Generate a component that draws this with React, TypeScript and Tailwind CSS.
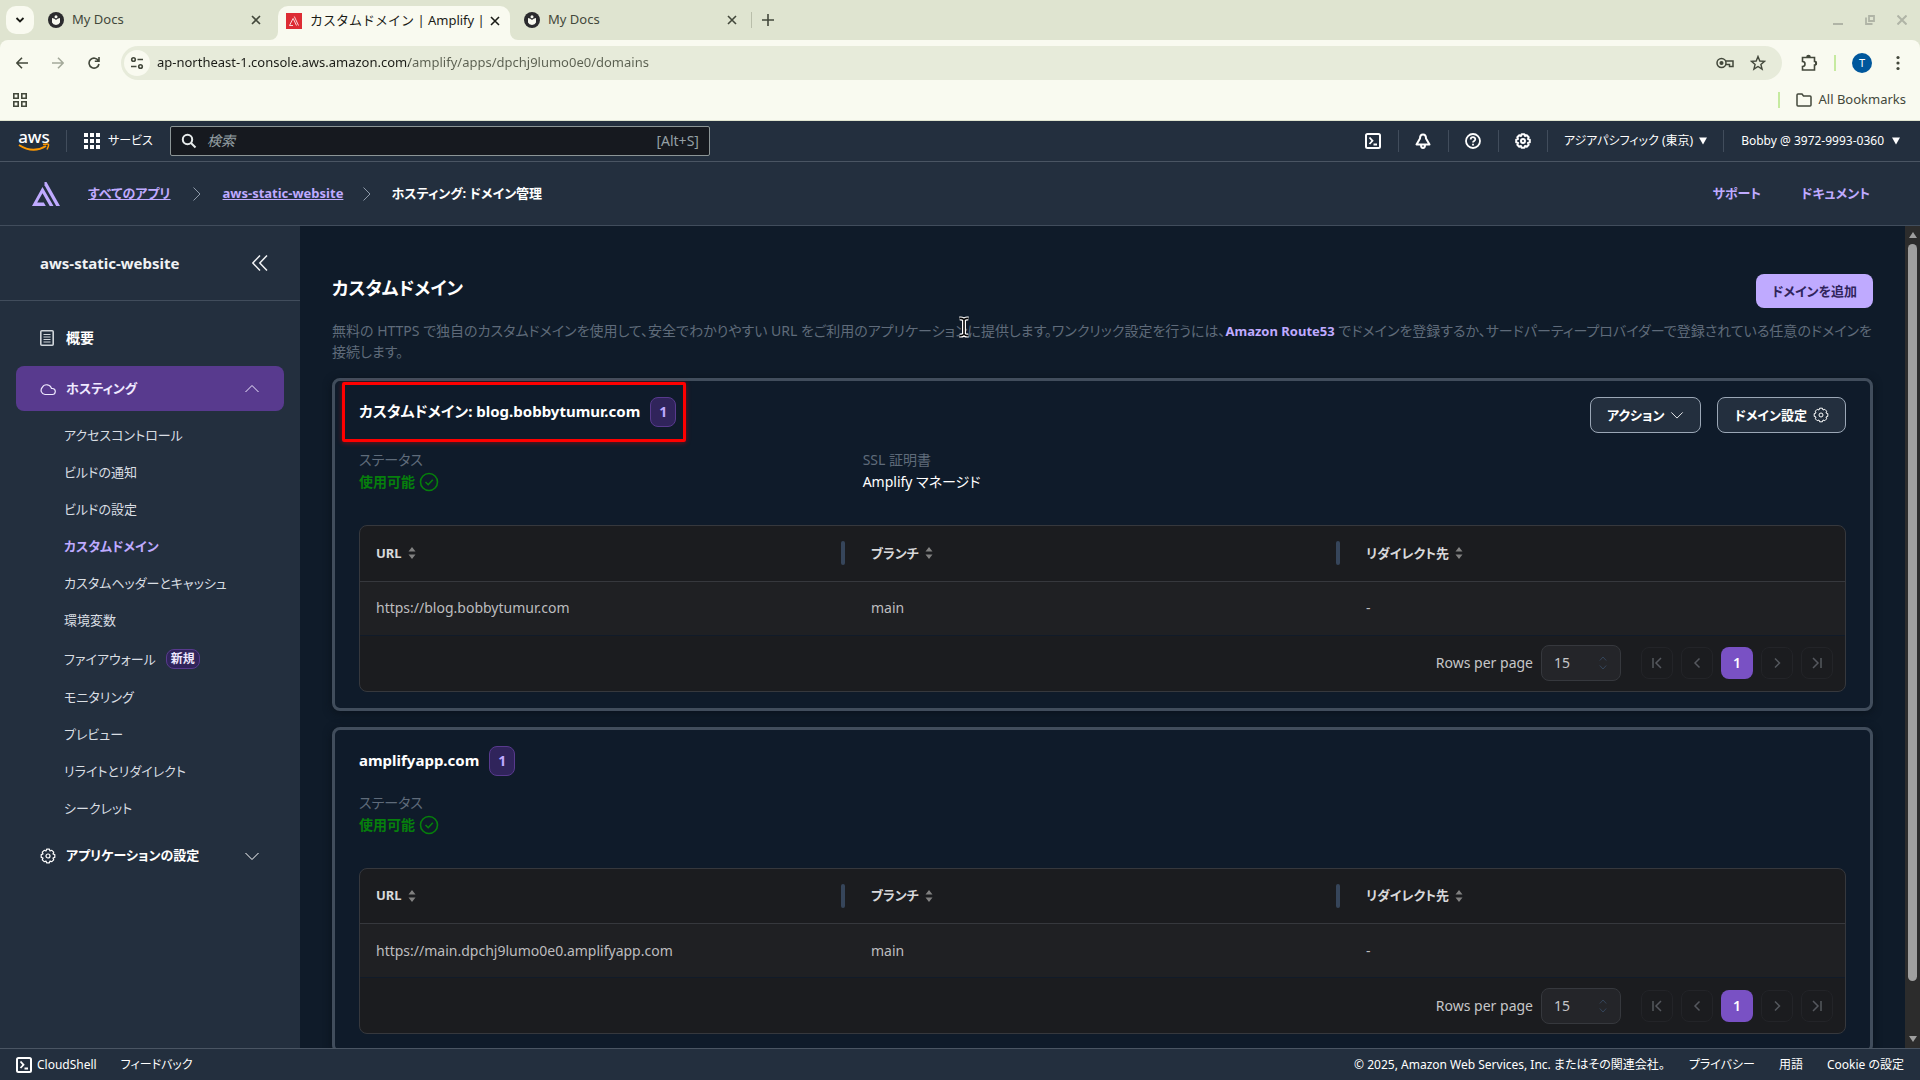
import type { ReactNode } from "react";

const font = "font-['Noto_Sans','Noto_Sans_CJK_JP',sans-serif]";

function Gear({ className }: { className: string }) {
  return (
    <svg viewBox="0 0 16 16" fill="none" stroke="currentColor" strokeLinejoin="round" className={className}>
      <path d="M6.6 1.2h2.8l.6 1.8 1.8-.7 1.9 1.9-.7 1.8 1.8.6v2.8l-1.8.6.7 1.8-1.9 1.9-1.8-.7-.6 1.8H6.6L6 13l-1.800.7-1.900-1.900.7-1.800-1.800-.6V6.600L3 6l-.7-1.800 1.900-1.900L6 3z" />
      <circle cx="8" cy="8" r="2" />
    </svg>
  );
}

function ShellIcon({ className }: { className: string }) {
  return (
    <svg viewBox="0 0 16 16" fill="none" stroke="currentColor" strokeWidth="2" className={className}>
      <rect x="1" y="1" width="14" height="14" rx="1.5" />
      <path d="M4.5 4.5l3 3.3-3 3.2M8.5 11.5H12" strokeWidth="1.8" />
    </svg>
  );
}

function Chevron({ d, className }: { d: string; className: string }) {
  return (
    <svg viewBox="0 0 16 16" fill="none" stroke="currentColor" className={className}>
      <path d={d} />
    </svg>
  );
}

function Favicon() {
  return (
    <svg viewBox="0 0 16 16" className="size-4 shrink-0">
      <circle cx="8" cy="8" r="8" fill="#2b2b2e" />
      <path d="M4 6l2.500.8a2 2 0 0 0 3 0L12 6v4.500q-1 2-4 2.500-3-.5-4-2.500z" fill="#f8f9f0" />
      <circle cx="8" cy="4.8" r="1.5" fill="#f8f9f0" />
    </svg>
  );
}

function CloseIcon() {
  return (
    <svg viewBox="0 0 10 10" fill="none" stroke="currentColor" strokeWidth="1.6" className="size-2.5">
      <path d="M1 1l8 8M9 1l-8 8" />
    </svg>
  );
}

function Tab({ title, className, icon }: { title: string; className: string; icon: ReactNode }) {
  return (
    <div className={`flex items-center gap-2 text-[13px] ${className}`}>
      {icon}
      <span className="min-w-0 flex-1 whitespace-nowrap">{title}</span>
      <button aria-label={`Close ${title}`}>
        <CloseIcon />
      </button>
    </div>
  );
}

function BrowserChrome() {
  return (
    <div className="shrink-0 bg-[#dfe4d0] text-[#43483b]">
      <div className="flex h-10 items-center">
        <button aria-label="Search tabs" className="ml-1.5 flex size-7 items-center justify-center rounded-[10px] bg-[#f9faf0] text-[#1b1c17]">
          <svg viewBox="0 0 10 10" fill="none" stroke="currentColor" strokeWidth="1.8" className="size-2.5">
            <path d="M1.5 3 5 6.5 8.5 3" />
          </svg>
        </button>
        <Tab title="My Docs" icon={<Favicon />} className="ml-3.5 w-[213px]" />
        <div className="relative ml-[17px] flex h-[34px] w-[232px] self-end rounded-t-[10px] bg-[#f9faf0] pr-2.5 pl-2">
          <svg viewBox="0 0 8 8" className="absolute bottom-0 -left-2 size-2" fill="#f9faf0">
            <path d="M8 0v8H0a8 8 0 0 0 8-8z" />
          </svg>
          <svg viewBox="0 0 8 8" className="absolute -right-2 bottom-0 size-2" fill="#f9faf0">
            <path d="M0 0v8h8a8 8 0 0 1-8-8z" />
          </svg>
          <Tab
            title="カスタムドメイン | Amplify |"
            className="h-[29px] min-w-0 flex-1 text-[#1b1c17]"
            icon={
              <svg viewBox="0 0 16 16" className="size-4 shrink-0">
                <rect width="16" height="16" fill="#dd2c34" />
                <path d="M7 5.500 3.500 12.500H7M7.200 5.500l3.300 7M8.300 3.500l4.200 9" fill="none" stroke="#fff" strokeWidth=".8" />
              </svg>
            }
          />
        </div>
        <Tab title="My Docs" icon={<Favicon />} className="ml-3.5 w-[213px]" />
        <div className="ml-3.5 h-4 w-px bg-[#b9beaa]" />
        <button aria-label="New tab" className="ml-2.5">
          <svg viewBox="0 0 12 12" fill="none" stroke="currentColor" strokeWidth="1.6" className="size-3">
            <path d="M6 0v12M0 6h12" />
          </svg>
        </button>
        <div className="ml-auto flex items-center gap-[22px] pr-[13px] text-[#b0b4a6]">
          <svg viewBox="0 0 10 10" className="size-2.5" stroke="currentColor" strokeWidth="2">
            <path d="M0 9h10" />
          </svg>
          <svg viewBox="0 0 10 10" className="size-2.5" fill="none" stroke="currentColor" strokeWidth="1.8">
            <path d="M4 1h5v5H4zM1 2.500V9h6.500" />
          </svg>
          <svg viewBox="0 0 10 10" className="size-2.5" fill="none" stroke="currentColor" strokeWidth="2">
            <path d="M.5.5l9 9M9.500.5l-9 9" />
          </svg>
        </div>
      </div>

      <div className="rounded-t-lg border-b border-[#dfe4d0] bg-[#f9faf0]">
        <div className="flex h-10 items-end">
          <div className="flex h-[34px] flex-1 items-center">
            <button aria-label="Back" className="ml-4">
              <svg viewBox="0 0 12 12" fill="none" stroke="currentColor" strokeWidth="1.6" className="size-3">
                <path d="M6 .8.8 6 6 11.200M1 6h11" />
              </svg>
            </button>
            <button aria-label="Forward" className="ml-6 text-[#a4a99a]">
              <svg viewBox="0 0 12 12" fill="none" stroke="currentColor" strokeWidth="1.6" className="size-3">
                <path d="M6 .8 11.200 6 6 11.200M11 6H0" />
              </svg>
            </button>
            <button aria-label="Reload" className="ml-6">
              <svg viewBox="0 0 12 12" fill="none" stroke="currentColor" strokeWidth="1.6" className="size-3">
                <path d="M10.500 3.800A5 5 0 1 0 11 7M11 0v4.200H6.800" />
              </svg>
            </button>
            <div className="ml-[21px] flex h-[34px] flex-1 items-center rounded-full bg-[#e7ebda] pr-4">
              <button aria-label="Site information" className="ml-[3px] flex size-[26px] items-center justify-center rounded-full bg-[#f9faf0]">
                <svg viewBox="0 0 14 14" fill="none" stroke="currentColor" strokeWidth="1.6" className="size-3.5">
                  <circle cx="3.5" cy="3.5" r="1.8" />
                  <path d="M7.500 3.500H13M1 10.500h5.500" />
                  <circle cx="10.5" cy="10.5" r="1.8" />
                </svg>
              </button>
              <input
                aria-label="Address"
                defaultValue="ap-northeast-1.console.aws.amazon.com/amplify/apps/dpchj9lumo0e0/domains"
                className="ml-[7px] min-w-0 flex-1 bg-[linear-gradient(90deg,#1b1c17_252px,#5a5f50_252px)] bg-clip-text text-[13px] text-transparent outline-none"
              />
              <svg viewBox="0 0 18 12" fill="none" stroke="currentColor" strokeWidth="1.5" className="h-3 w-[18px]">
                <circle cx="5.5" cy="6" r="4.5" />
                <circle cx="5.5" cy="6" r="1.3" fill="currentColor" />
                <path d="M9.500 4H17v5.500h-3.500V7.500H9.500" />
              </svg>
              <svg viewBox="0 0 16 16" fill="none" stroke="currentColor" strokeWidth="1.4" className="ml-4 size-4">
                <path d="m8 1.500 1.800 4.500 4.700.4-3.600 3 1.200 4.700L8 11.500l-4.100 2.600 1.200-4.700-3.600-3L6.200 6z" />
              </svg>
            </div>
            <button aria-label="Extensions" className="ml-[18px]">
              <svg viewBox="0 0 18 18" fill="none" stroke="currentColor" strokeWidth="1.6" className="size-[18px]">
                <path d="M2.500 3.500h12v4a1.500 1.500 0 0 1 0 3.500v5h-12v-3.500a2.500 2.500 0 0 0 0-5z" />
                <path d="M7 3a1.500 1.500 0 0 1 3 0M15 7.500a1.800 1.800 0 0 1 0 3.500" fill="currentColor" />
              </svg>
            </button>
            <div className="ml-4 h-4 w-0.5 bg-[#c6eaa0]" />
            <button className="ml-4 flex size-5 items-center justify-center rounded-full bg-[#00579c] text-[11px] text-white">T</button>
            <button aria-label="Menu" className="mr-5 ml-6">
              <svg viewBox="0 0 4 16" fill="currentColor" className="h-4 w-1">
                <circle cx="2" cy="2.5" r="1.6" />
                <circle cx="2" cy="8" r="1.6" />
                <circle cx="2" cy="13.5" r="1.6" />
              </svg>
            </button>
          </div>
        </div>
        <div className="flex h-10 items-center pr-3.5 pl-3">
          <svg viewBox="0 0 16 16" fill="none" stroke="currentColor" strokeWidth="1.6" className="size-4">
            <path d="M1.800 1.800h4.400v4.400H1.800zM9.800 1.800h4.400v4.400H9.800zM1.800 9.800h4.400v4.400H1.800zM9.800 9.800h4.400v4.400H9.800z" />
          </svg>
          <div className="ml-auto h-4 w-0.5 bg-[#c6eaa0]" />
          <svg viewBox="0 0 16 14" fill="none" stroke="currentColor" strokeWidth="1.5" className="mr-1.5 ml-4 h-3.5 w-4">
            <path d="M1 12V2q0-1 1-1h4l1.500 2H14q1 0 1 1v8q0 1-1 1H2q-1 0-1-1z" />
          </svg>
          <span className="text-[13px]">All Bookmarks</span>
        </div>
      </div>
    </div>
  );
}

function AwsNav() {
  return (
    <header className="flex h-[41px] shrink-0 items-center border-b border-[#4a5563] bg-[#232f3e] text-xs text-white">
      <a href="#home" aria-label="aws" className="ml-[18px]">
        <div className="flex h-[22px] w-8 flex-col items-center">
          <span className="text-[17px] leading-[13px] font-medium">aws</span>
          <svg viewBox="0 0 32 9" className="h-[9px] w-8" fill="none" stroke="#ff9900" strokeWidth="2">
            <path d="M1 2q14 9 27 1" />
            <path d="M25 1.500q5-1 5.500 0t-1.500 5" strokeWidth="1.5" />
          </svg>
        </div>
      </a>
      <div className="ml-4 h-[22px] w-px bg-[#414d5c]" />
      <button className="ml-[17px] flex items-center gap-2">
        <svg viewBox="0 0 16 16" fill="currentColor" className="size-4">
          <path d="M0 0h4v4H0zM6 0h4v4H6zM12 0h4v4h-4zM0 6h4v4H0zM6 6h4v4H6zM12 6h4v4h-4zM0 12h4v4H0zM6 12h4v4H6zM12 12h4v4h-4z" />
        </svg>
        サービス
      </button>
      <div className="ml-[17px] flex h-[30px] w-[540px] items-center rounded-xs border border-[#8c9596] bg-[#16191f] px-2.5 text-sm text-[#95a0a5]">
        <svg viewBox="0 0 16 16" fill="none" stroke="#e8ecec" strokeWidth="2" className="size-4">
          <circle cx="6.5" cy="6.5" r="4.7" />
          <path d="m10 10 4.500 4.500" />
        </svg>
        <input
          aria-label="検索"
          placeholder="検索"
          className="ml-2.5 min-w-0 flex-1 bg-transparent outline-none placeholder:text-[#95a0a5] placeholder:italic"
        />
        <span>[Alt+S]</span>
      </div>
      <div className="ml-auto flex items-center">
        <button aria-label="CloudShell" className="flex w-[50px] justify-center">
          <ShellIcon className="size-4" />
        </button>
        <button aria-label="Notifications" className="flex h-[22px] w-[50px] items-center justify-center border-l border-[#414d5c]">
          <svg viewBox="0 0 16 16" fill="none" stroke="currentColor" strokeWidth="2" strokeLinejoin="round" className="size-4">
            <path d="M8 1.500C5.500 1.500 5 3.500 5 5.500L1.500 11.500h13L11 5.500c0-2-.5-4-3-4zM6 12c0 4 4 4 4 0" />
          </svg>
        </button>
        <button aria-label="Help" className="flex h-[22px] w-[50px] items-center justify-center border-l border-[#414d5c]">
          <svg viewBox="0 0 16 16" fill="none" stroke="currentColor" strokeWidth="1.8" className="size-4">
            <circle cx="8" cy="8" r="7" />
            <path d="M5.700 6.500c0-3 4.600-3 4.600-.2C10.300 8 8 7.800 8 9.500M8 10.800v1.700" />
          </svg>
        </button>
        <button aria-label="Settings" className="flex h-[22px] w-[50px] items-center justify-center border-x border-[#414d5c]">
          <Gear className="size-4 stroke-2" />
        </button>
        <button className="flex h-[22px] items-center gap-1.5 pr-4 pl-4">
          アジアパシフィック (東京)
          <svg viewBox="0 0 8 8" fill="currentColor" className="size-2">
            <path d="M0 .5h8l-4 7z" />
          </svg>
        </button>
        <button className="flex h-[22px] items-center gap-2 border-l border-[#414d5c] pr-5 pl-[17px]">
          Bobby @ 3972-9993-0360
          <svg viewBox="0 0 8 8" fill="currentColor" className="size-2">
            <path d="M0 .5h8l-4 7z" />
          </svg>
        </button>
      </div>
    </header>
  );
}

function AmplifyBar() {
  return (
    <div className="flex h-16 shrink-0 items-center border-b border-[#414d5c] bg-[#232f3e] pr-[50px] pl-8 text-[13px] font-bold text-[#bfaaff]">
      <svg viewBox="0 0 28 24" fill="currentColor" className="h-6 w-7">
        <path d="M10.500 5l11 19h-3.800l-7.200-12.700-5.300 9.300h6.600l2 3.400H0z" />
        <path d="M12.500 0h2L28 24h-3.800L12.500 3.300z" />
      </svg>
      <nav className="ml-7 flex items-center">
        <a href="#apps" className="underline">すべてのアプリ</a>
        <Chevron d="m4.500 1.500 6.500 6.500-6.500 6.500" className="mx-4.5 size-4 text-[#8d99a8]" />
        <a href="#app" className="underline">aws-static-website</a>
        <Chevron d="m4.500 1.500 6.500 6.500-6.500 6.500" className="mx-4 size-4 text-[#8d99a8]" />
        <span className="text-white">ホスティング: ドメイン管理</span>
      </nav>
      <a href="#support" className="ml-auto">サポート</a>
      <a href="#docs" className="ml-10">ドキュメント</a>
    </div>
  );
}

const items = [
  "アクセスコントロール",
  "ビルドの通知",
  "ビルドの設定",
  "カスタムドメイン",
  "カスタムヘッダーとキャッシュ",
  "環境変数",
  "ファイアウォール",
  "モニタリング",
  "プレビュー",
  "リライトとリダイレクト",
  "シークレット",
];

function Sidebar() {
  return (
    <aside className="w-[300px] shrink-0 bg-[#232f3e] text-[13px] text-[#d9dee3]">
      <div className="flex h-[75px] items-center justify-between border-b border-[#414d5c] pr-8 pl-10 text-[15px] font-bold text-[#f0f2f4]">
        aws-static-website
        <button aria-label="Collapse">
          <Chevron d="M8 .5.8 8 8 15.500M15 .5 7.800 8l7.200 7.500" className="size-4 stroke-[1.500px]" />
        </button>
      </div>
      <nav className="px-4 pt-4">
        <a href="#overview" className="flex h-[41px] items-center gap-3 pl-6 text-sm font-bold text-white">
          <svg viewBox="0 0 14 16" fill="none" stroke="#d0d5da" strokeWidth="1.6" className="h-4 w-3.5">
            <rect x=".8" y=".8" width="12.4" height="14.4" rx="1" />
            <path d="M3.500 4.500h7M3.500 7h7M3.500 9.500h7M3.500 12h7" strokeWidth="1.2" />
          </svg>
          概要
        </a>
        <button className="mt-2 flex h-[45px] w-full items-center gap-2.5 rounded-lg bg-[#583a8e] pr-6 pl-6 font-bold text-[#efe9ff]">
          <svg viewBox="0 0 16 16" fill="none" stroke="currentColor" strokeWidth="1.2" className="size-4">
            <path d="M5 13.500h7a3 3 0 0 0 .5-6H11.500a5 5 0 0 0-9.300-1A4.200 4.200 0 0 0 5 13.500z" />
          </svg>
          ホスティング
          <Chevron d="m1.500 11 6.500-6.500L14.500 11" className="ml-auto size-4" />
        </button>
        <ul className="mt-1.5 pl-12">
          {items.map((item) => (
            <li key={item}>
              <a
                href="#item"
                aria-current={item === "カスタムドメイン" ? "page" : undefined}
                className="flex items-center py-2 leading-[21px] aria-[current=page]:font-bold aria-[current=page]:text-[#bfaaff]"
              >
                {item}
                {item === "ファイアウォール" && (
                  <span className="my-0.5 ml-2.5 rounded-lg border border-[#583a8e] bg-[#30245b] px-1 text-xs leading-[18px] font-bold text-[#efe9ff]">新規</span>
                )}
              </a>
            </li>
          ))}
        </ul>
        <button className="mt-2 flex h-[41px] w-full items-center gap-2.5 pr-6 pl-6 font-bold text-white">
          <Gear className="size-4 stroke-[1.200px]" />
          アプリケーションの設定
          <Chevron d="M1.500 5 8 11.500 14.500 5" className="ml-auto size-4" />
        </button>
      </nav>
    </aside>
  );
}

function SortIcon() {
  return (
    <svg viewBox="0 0 8 12" fill="#808080" className="h-3 w-2">
      <path d="M4 0l3.500 4.500h-7zM4 12l3.500-4.500h-7z" />
    </svg>
  );
}

function PageButton({ label, d }: { label: string; d: string }) {
  return (
    <button disabled aria-label={label} className="flex size-8 items-center justify-center rounded-lg border border-[#232428] text-[#55585e]">
      <Chevron d={d} className="size-4 stroke-[1.500px]" />
    </button>
  );
}

function DomainTable({ url, id }: { url: string; id: string }) {
  return (
    <div className="overflow-hidden rounded-lg border border-[#36383d] bg-[#1b1c1f]">
      <table className="w-full table-fixed text-left text-sm text-[#bdbdbf]">
        <thead>
          <tr className="h-[55px] border-b border-[#36383d] text-[13px] text-[#d8d8da]">
            {["URL", "ブランチ", "リダイレクト先"].map((h, i) => (
              <th key={h} className="py-0 pl-4 font-bold">
                <div className="flex h-6 items-center gap-1.5">
                  {h}
                  <SortIcon />
                  {i < 2 && <span className="mr-2.5 ml-auto h-6 w-1 rounded-full bg-[#36455a]" />}
                </div>
              </th>
            ))}
          </tr>
        </thead>
        <tbody>
          <tr className="h-[54px] border-b border-[#111b29] bg-[#1f2023]">
            <td className="pl-4">{url}</td>
            <td className="pl-4">main</td>
            <td className="pl-4">-</td>
          </tr>
        </tbody>
      </table>
      <div className="flex h-[55px] items-center justify-end gap-2 pr-3 text-sm text-[#c6c6c8]">
        <label htmlFor={id}>Rows per page</label>
        <div className="relative mr-3 w-20">
          <select id={id} className="h-9 w-full appearance-none rounded-lg border border-[#36383d] bg-[#242529] pl-3">
            <option>15</option>
          </select>
          <svg viewBox="0 0 8 14" fill="none" stroke="#36455a" className="pointer-events-none absolute top-[11px] right-3.5 h-3.5 w-2">
            <path d="M.8 4.500 4 1l3.200 3.500M.8 9.500 4 13l3.200-3.500" />
          </svg>
        </div>
        <PageButton label="First page" d="M4 3v10M12 3 7 8l5 5" />
        <PageButton label="Previous page" d="M10.500 3.500 6 8l4.500 4.500" />
        <button className="size-8 rounded-lg bg-[#7951c4] font-semibold text-white">1</button>
        <PageButton label="Next page" d="M6 3.500 10.500 8 6 12.500" />
        <PageButton label="Last page" d="M12 3v10M4 3l5 5-5 5" />
      </div>
    </div>
  );
}

function Count() {
  return (
    <span className="flex h-[30px] items-center rounded-lg border border-[#583a8e] bg-[#30245b] px-2 text-sm font-bold text-[#bfaaff]">1</span>
  );
}

function Status() {
  return (
    <div className="leading-[22px]">
      <div className="text-[#5f6b7a]">ステータス</div>
      <div className="flex items-center gap-1 font-semibold text-[#067f0c]">
        使用可能
        <svg viewBox="0 0 20 20" fill="none" stroke="currentColor" strokeWidth="1.6" className="size-5">
          <circle cx="10" cy="10" r="8.5" />
          <path d="m6.500 10 2.700 2.700 4.600-4.900" />
        </svg>
      </div>
    </div>
  );
}

const card = "rounded-lg border-3 border-[#414d5c] bg-[#0f1b2a] px-6 pt-4 pb-4 shadow-[0_2px_8px_#0a121c]";
const cardButton = "flex h-9 items-center gap-1.5 rounded-lg border border-[#9ba7b6] bg-[#232f3e] px-4 text-[13px] font-bold text-white";

function Main() {
  return (
    <main className="min-w-0 flex-1 overflow-hidden bg-[#0f1b29] px-8 pt-12 text-sm text-white">
      <div className="flex items-start justify-between">
        <h1 className="text-lg leading-7 font-bold">カスタムドメイン</h1>
        <button className="h-[34px] rounded-lg bg-[#bfaaff] px-4 text-[13px] font-bold text-[#30245b]">ドメインを追加</button>
      </div>
      <div className="relative mt-3 leading-[21px] text-[#5f6b7a]">
        無料の HTTPS で独自のカスタムドメインを使用して、安全でわかりやすい URL をご利用のアプリケーションに提供します。ワンクリック設定を行うには、
        <a href="#route53" className="text-[13px] leading-4 font-bold text-[#bfaaff]">Amazon Route53</a>{" "}
        でドメインを登録するか、サードパーティープロバイダーで登録されている任意のドメインを接続します。
        <svg viewBox="0 0 12 22" className="absolute -top-1 left-[626px] h-[22px] w-3" fill="none">
          <path d="M1.500 2.500Q5 2 6 4q1-2 4.500-1.500M6 4v14M1.500 19.500Q5 20 6 18q1 2 4.500 1.500" stroke="#fff" strokeWidth="4" />
          <path d="M1.500 2.500Q5 2 6 4q1-2 4.500-1.500M6 4v14M1.500 19.500Q5 20 6 18q1 2 4.500 1.500" stroke="#000" strokeWidth="1.6" />
        </svg>
      </div>

      <section className={`relative mt-4 ${card}`}>
        <div className="pointer-events-none absolute top-px left-[7px] h-[60px] w-[344px] rounded-xs border-3 border-[#ff0000] shadow-[0_1px_5px_#ff000066]" />
        <div className="flex items-start gap-4">
          <h2 className="mr-auto flex items-center gap-2.5 text-[15px] font-bold">
            カスタムドメイン: blog.bobbytumur.com <Count />
          </h2>
          <button className={cardButton}>
            アクション
            <Chevron d="M1.500 5 8 11.500 14.500 5" className="size-3.5" />
          </button>
          <button className={cardButton}>
            ドメイン設定
            <Gear className="size-4" />
          </button>
        </div>
        <div className="mt-4 grid grid-cols-3 gap-6 pb-8">
          <Status />
          <div className="leading-[22px]">
            <div className="text-[#5f6b7a]">SSL 証明書</div>
            <div>Amplify マネージド</div>
          </div>
        </div>
        <DomainTable url="https://blog.bobbytumur.com" id="rows-custom" />
      </section>

      <section className={`mt-4 ${card}`}>
        <h2 className="flex items-center gap-2.5 text-[15px] font-bold">
          amplifyapp.com <Count />
        </h2>
        <div className="mt-4 pb-8">
          <Status />
        </div>
        <DomainTable url="https://main.dpchj9lumo0e0.amplifyapp.com" id="rows-default" />
      </section>
    </main>
  );
}

function Scrollbar() {
  return (
    <div className="flex w-[15px] shrink-0 flex-col items-center justify-between bg-[#2c2c2c] py-1.5">
      <svg viewBox="0 0 8 6" fill="#9f9f9f" className="h-1.5 w-2">
        <path d="M4 0l4 6H0z" />
      </svg>
      <div className="mt-1.5 mb-auto h-[91%] w-[9px] rounded-full bg-[#9f9f9f]" />
      <svg viewBox="0 0 8 6" fill="#9f9f9f" className="h-1.5 w-2">
        <path d="M4 6l4-6H0z" />
      </svg>
    </div>
  );
}

export default function App() {
  return (
    <div lang="ja" className={`flex h-screen flex-col overflow-hidden ${font}`}>
      <BrowserChrome />
      <div className="flex min-h-0 flex-1 flex-col [font-feature-settings:'palt']">
        <AwsNav />
        <AmplifyBar />
        <div className="flex min-h-0 flex-1">
          <Sidebar />
          <Main />
          <Scrollbar />
        </div>
        <footer className="flex h-8 shrink-0 items-center border-t border-[#4a5563] bg-[#232f3e] px-4 text-xs text-white">
          <button className="flex items-center gap-[5px]">
            <ShellIcon className="size-4" />
            CloudShell
          </button>
          <a href="#feedback" className="ml-6">フィードバック</a>
          <span className="ml-auto">© 2025, Amazon Web Services, Inc. またはその関連会社。</span>
          <a href="#privacy" className="ml-6">プライバシー</a>
          <a href="#terms" className="ml-6">用語</a>
          <a href="#cookies" className="ml-6">Cookie の設定</a>
        </footer>
      </div>
    </div>
  );
}
